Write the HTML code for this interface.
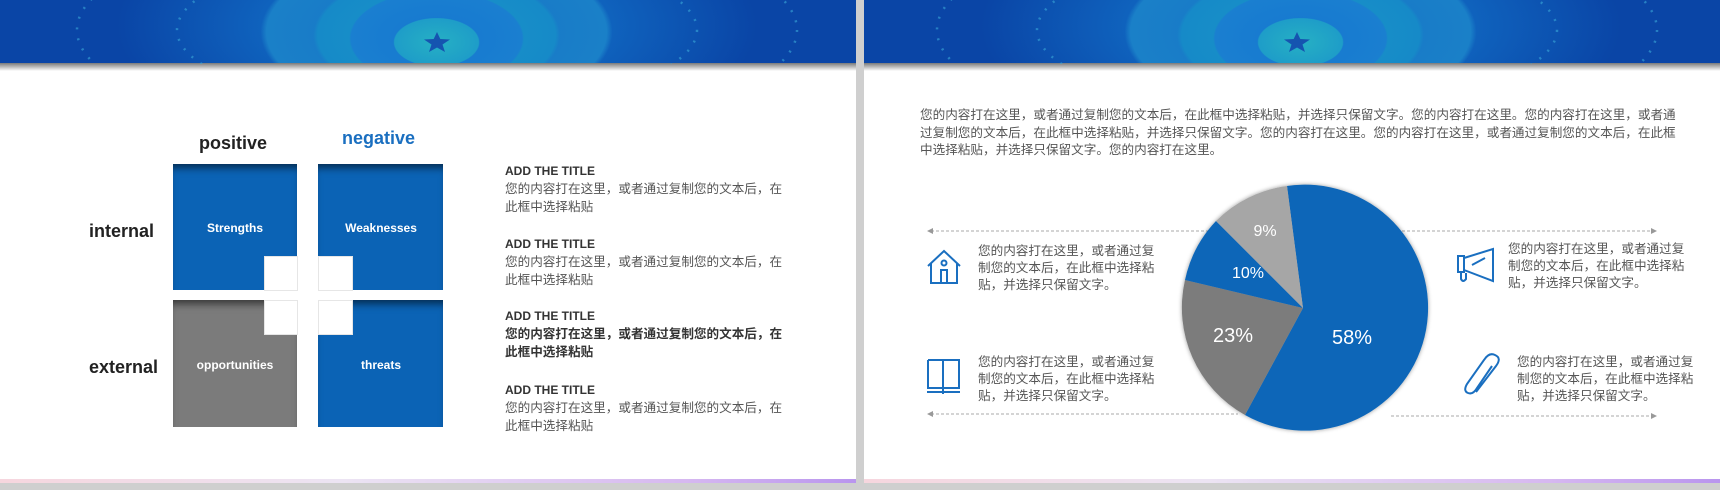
<!DOCTYPE html>
<html><head><meta charset="utf-8">
<style>
*{margin:0;padding:0;box-sizing:border-box}
body{width:1720px;height:490px;background:#cfcfcf;position:relative;overflow:hidden;font-family:"Liberation Sans","Noto Sans CJK SC",sans-serif}
.slide{position:absolute;top:0;height:483px;background:#fff;overflow:hidden}
.hdr{position:absolute;left:0;top:0;width:100%;height:64px;
background:radial-gradient(ellipse 60px 34px at 51% 66%,#26b0c4 0%,#1e9dc8 70%,transparent 72%),
radial-gradient(ellipse 95px 52px at 51% 60%,#1577cf 0%,#1a7fd0 90%,transparent 92%),
radial-gradient(ellipse 140px 72px at 51% 55%,#1a96c6 0%,#168ac8 85%,transparent 88%),
radial-gradient(ellipse 200px 95px at 51% 50%,#1572c8 0%,#1a80c8 85%,transparent 88%),
radial-gradient(ellipse 320px 130px at 51% 40%,#1a8ac8 0%,#0f62bd 55%,#0a45a6 100%)}
.hdr:after{content:"";position:absolute;left:0;bottom:-7px;width:100%;height:8px;background:linear-gradient(#7a7a7a,#fff)}
.dots{position:absolute;left:0;top:0;width:100%;height:64px}
.star{position:absolute;top:32px;width:28px;height:20px}
.foot{position:absolute;left:0;top:479px;width:100%;height:4px;background:linear-gradient(90deg,#f6d6de,#ece4f3 40%,#d6b8f0 80%,#b995ee)}
.abs{position:absolute;white-space:nowrap}
.box{position:absolute;box-shadow:inset 0 8px 8px -4px rgba(0,0,0,.55)}
.notch{position:absolute;background:#fff;border:1px solid #e6e6e6}
.bl{color:#fff;font-weight:bold;font-size:12px;transform:translateX(-50%)}
.t{font-size:12.6px;color:#555;line-height:18px}
.h{font-size:12px;font-weight:bold;color:#333}
</style></head><body>

<div class="slide" style="left:0;width:856px">
 <div class="hdr"></div>
 <svg class="dots" viewBox="0 0 856 64"><g fill="none" stroke="#3aa8d8" stroke-width="2.5" stroke-dasharray="2,9" opacity=".6"><ellipse cx="437" cy="30" rx="260" ry="80"/><ellipse cx="437" cy="30" rx="360" ry="110"/></g></svg>
 <svg class="star" style="left:423px" viewBox="0 0 28 20"><polygon points="14,0 17.3,7 27,7.5 19.5,12.5 22,20 14,15.5 6,20 8.5,12.5 1,7.5 10.7,7" fill="#1554b0"/></svg>
 <div class="foot"></div>

 <div class="abs" style="left:199px;top:133px;font-size:18px;font-weight:bold;color:#222">positive</div>
 <div class="abs" style="left:342px;top:128px;font-size:18px;font-weight:bold;color:#1a6fc0">negative</div>
 <div class="abs" style="left:89px;top:221px;font-size:18px;font-weight:bold;color:#222">internal</div>
 <div class="abs" style="left:89px;top:357px;font-size:18px;font-weight:bold;color:#222">external</div>

 <div class="box" style="left:173px;top:164px;width:124px;height:126px;background:#0b63b5"></div>
 <div class="box" style="left:318px;top:164px;width:125px;height:126px;background:#0b63b5"></div>
 <div class="box" style="left:173px;top:300px;width:124px;height:127px;background:#7b7b7b"></div>
 <div class="box" style="left:318px;top:300px;width:125px;height:127px;background:#0b63b5"></div>
 <div class="notch" style="left:264px;top:256px;width:34px;height:35px"></div>
 <div class="notch" style="left:318px;top:256px;width:35px;height:35px"></div>
 <div class="notch" style="left:264px;top:300px;width:34px;height:35px"></div>
 <div class="notch" style="left:318px;top:300px;width:35px;height:35px"></div>
 <div class="abs bl" style="left:235px;top:221px">Strengths</div>
 <div class="abs bl" style="left:381px;top:221px">Weaknesses</div>
 <div class="abs bl" style="left:235px;top:358px">opportunities</div>
 <div class="abs bl" style="left:381px;top:358px">threats</div>

 <div class="abs" style="left:505px;top:162px">
  <div class="h" style="line-height:18px">ADD THE TITLE</div>
  <div class="t">您的内容打在这里，或者通过复制您的文本后，在<br>此框中选择粘贴</div>
 </div>
 <div class="abs" style="left:505px;top:235px">
  <div class="h" style="line-height:18px">ADD THE TITLE</div>
  <div class="t">您的内容打在这里，或者通过复制您的文本后，在<br>此框中选择粘贴</div>
 </div>
 <div class="abs" style="left:505px;top:307px">
  <div class="h" style="line-height:18px">ADD THE TITLE</div>
  <div class="t" style="font-weight:bold;color:#333">您的内容打在这里，或者通过复制您的文本后，在<br>此框中选择粘贴</div>
 </div>
 <div class="abs" style="left:505px;top:381px">
  <div class="h" style="line-height:18px">ADD THE TITLE</div>
  <div class="t">您的内容打在这里，或者通过复制您的文本后，在<br>此框中选择粘贴</div>
 </div>
</div>

<div class="slide" style="left:864px;width:856px">
 <div class="hdr"></div>
 <svg class="dots" viewBox="0 0 856 64"><g fill="none" stroke="#3aa8d8" stroke-width="2.5" stroke-dasharray="2,9" opacity=".6"><ellipse cx="433" cy="30" rx="260" ry="80"/><ellipse cx="433" cy="30" rx="360" ry="110"/></g></svg>
 <svg class="star" style="left:419px" viewBox="0 0 28 20"><polygon points="14,0 17.3,7 27,7.5 19.5,12.5 22,20 14,15.5 6,20 8.5,12.5 1,7.5 10.7,7" fill="#1554b0"/></svg>
 <div class="foot"></div>
</div>

<div class="abs t" style="left:920px;top:107px;line-height:17.5px;font-size:12.6px">您的内容打在这里，或者通过复制您的文本后，在此框中选择粘贴，并选择只保留文字。您的内容打在这里。您的内容打在这里，或者通<br>过复制您的文本后，在此框中选择粘贴，并选择只保留文字。您的内容打在这里。您的内容打在这里，或者通过复制您的文本后，在此框<br>中选择粘贴，并选择只保留文字。您的内容打在这里。</div>

<svg class="abs" style="left:0;top:0" width="1720" height="490">
 <g stroke="#aaa" stroke-dasharray="3,2" stroke-width="1">
  <line x1="931" y1="231" x2="1222" y2="231"/><line x1="1392" y1="231" x2="1653" y2="231"/>
  <line x1="931" y1="414" x2="1238" y2="414"/><line x1="1391" y1="416" x2="1653" y2="416"/>
 </g>
 <g fill="#999">
  <polygon points="927,231 933,228 933,234"/><polygon points="1657,231 1651,228 1651,234"/>
  <polygon points="927,414 933,411 933,417"/><polygon points="1657,416 1651,413 1651,419"/>
 </g>
 <defs><filter id="sh"><feDropShadow dx="0" dy="0" stdDeviation="2" flood-opacity=".4"/></filter></defs>
 <g transform="translate(1303,308)" filter="url(#sh)">
  <path d="M0,0 L-16,-122 A123,123 0 1 1 -58,107 Z" fill="#0b66b8"/>
  <path d="M0,0 L-58,107 A123,123 0 0 1 -118,-28 Z" fill="#7c7c7c"/>
  <path d="M0,0 L-118,-28 A123,123 0 0 1 -87,-87 Z" fill="#0b66b8"/>
  <path d="M0,0 L-87,-87 A123,123 0 0 1 -16,-122 Z" fill="#a6a6a6"/>
 </g>
 <g fill="#fff" font-family="Liberation Sans, sans-serif" text-anchor="middle">
  <text x="1265" y="236" font-size="16">9%</text>
  <text x="1248" y="278" font-size="16">10%</text>
  <text x="1233" y="342" font-size="20">23%</text>
  <text x="1352" y="344" font-size="20">58%</text>
 </g>
 <g fill="none" stroke="#1a6fc0" stroke-width="2">
  <path d="M928,266 L944,251 L960,266 M931,263 V283 H957 V263"/>
  <circle cx="944" cy="263" r="2.5"/><path d="M941,282 V270 H947 V282"/>
  <path d="M928,360 V388 H943 V360 H928 M943,360 H959 V388 H943 M927,392 H960 M943,388 V394"/>
  <path d="M1458,256 H1464 V272 H1458 Z M1464,258 L1493,249 V281 L1464,270 M1472,265 L1485,258 M1461,272 V279 Q1463,283 1466,279 V273"/>
  <path d="M1476,392 L1496,366 Q1502,358 1495,355 Q1489,352 1484,360 L1467,384 Q1463,391 1468,393 Q1473,395 1477,388 L1492,366"/>
 </g>
</svg>

<div class="abs t" style="left:978px;top:243px;line-height:17px">您的内容打在这里，或者通过复<br>制您的文本后，在此框中选择粘<br>贴，并选择只保留文字。</div>
<div class="abs t" style="left:978px;top:354px;line-height:17px">您的内容打在这里，或者通过复<br>制您的文本后，在此框中选择粘<br>贴，并选择只保留文字。</div>
<div class="abs t" style="left:1508px;top:241px;line-height:17px">您的内容打在这里，或者通过复<br>制您的文本后，在此框中选择粘<br>贴，并选择只保留文字。</div>
<div class="abs t" style="left:1517px;top:354px;line-height:17px">您的内容打在这里，或者通过复<br>制您的文本后，在此框中选择粘<br>贴，并选择只保留文字。</div>
</body></html>
